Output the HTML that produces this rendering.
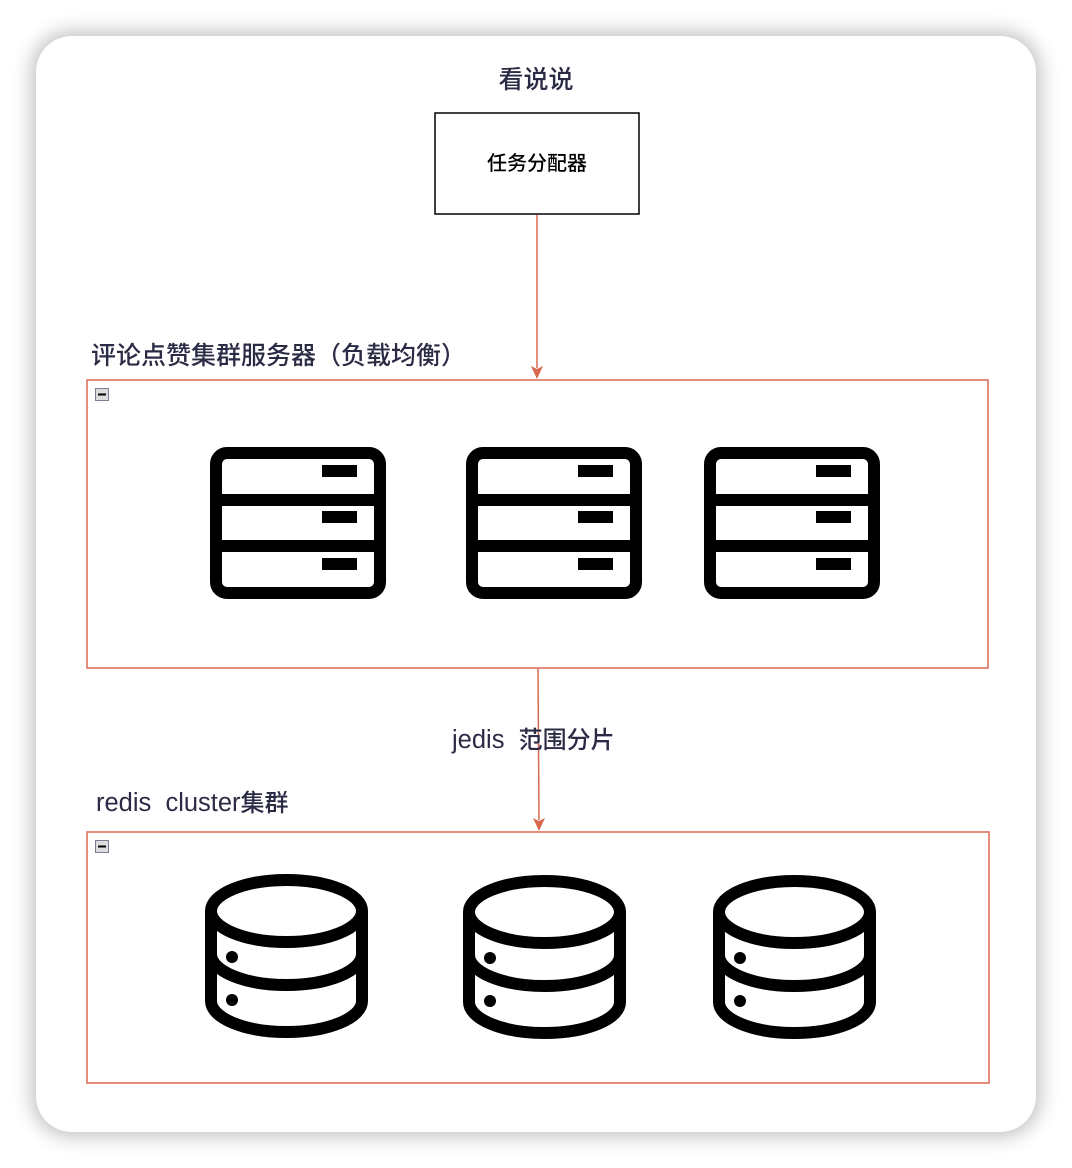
<!DOCTYPE html>
<html><head><meta charset="utf-8"><style>
html,body{margin:0;padding:0;background:#fff;}
body{width:1072px;height:1168px;overflow:hidden;position:relative;}
.card{position:absolute;left:36px;top:36px;width:1000px;height:1096px;border-radius:36px;background:#fff;box-shadow:0 0 18px 6px rgba(0,0,0,0.22);}
svg{position:absolute;left:0;top:0;}
text{font-family:"Liberation Sans","Noto Sans CJK SC",sans-serif;white-space:pre;font-weight:500;}
</style></head><body>
<div class="card"></div>
<svg width="1072" height="1168" viewBox="0 0 1072 1168">
<defs>
<g id="srv" fill="none" stroke="#000" stroke-width="12">
<rect x="6" y="6" width="164" height="140" rx="11"/>
<line x1="6" y1="53" x2="170" y2="53"/>
<line x1="6" y1="99" x2="170" y2="99"/>
<rect x="112" y="18" width="35" height="12" fill="#000" stroke="none"/>
<rect x="112" y="64" width="35" height="12" fill="#000" stroke="none"/>
<rect x="112" y="111" width="35" height="12" fill="#000" stroke="none"/>
</g>
<g id="db" fill="none" stroke="#000" stroke-width="12">
<ellipse cx="81.5" cy="37" rx="75.5" ry="31"/>
<path d="M6,37 V127 A75.5,31 0 0 0 157,127 V37"/>
<path d="M6,80 A75.5,31 0 0 0 157,80"/>
<circle cx="27" cy="83" r="6" fill="#000" stroke="none"/>
<circle cx="27" cy="126" r="6" fill="#000" stroke="none"/>
</g>
</defs>
<text x="536" y="88" font-size="25" fill="#2b2b45" text-anchor="middle">看说说</text>
<rect x="435" y="113" width="204" height="101" fill="#fff" stroke="#000" stroke-width="1.5"/>
<text x="537" y="170" font-size="20" fill="#000" text-anchor="middle">任务分配器</text>
<line x1="537" y1="215" x2="537" y2="368" stroke="#d9694e" stroke-width="1.5"/>
<path d="M531,366 L537,379 L543,366 L537,369 Z" fill="#d9694e"/>
<text x="91" y="364" font-size="25" fill="#2b2b45">评论点赞集群服务器（负载均衡）</text>
<rect x="87" y="380" width="901" height="288" fill="none" stroke="#d9694e" stroke-width="1.5"/>
<rect x="95.5" y="388.5" width="13" height="12" fill="#ddd" stroke="#7a8090"/><line x1="98" y1="394.5" x2="106" y2="394.5" stroke="#000" stroke-width="2"/>
<use href="#srv" x="210" y="447"/>
<use href="#srv" x="466" y="447"/>
<use href="#srv" x="704" y="447"/>
<line x1="538" y1="669" x2="539" y2="820" stroke="#d9694e" stroke-width="1.5"/>
<path d="M533,818 L539,831 L545,818 L539,821 Z" fill="#d9694e"/>
<text x="452" y="748" font-size="24" fill="#2b2b45"><tspan font-size="25.5">jedis  </tspan>范围分片</text>
<text x="96" y="811" font-size="24" fill="#2b2b45"><tspan font-size="25.5">redis  cluster</tspan>集群</text>
<rect x="87" y="832" width="902" height="251" fill="none" stroke="#d9694e" stroke-width="1.5"/>
<rect x="95.5" y="840.5" width="13" height="12" fill="#ddd" stroke="#7a8090"/><line x1="98" y1="846.5" x2="106" y2="846.5" stroke="#000" stroke-width="2"/>
<use href="#db" x="205" y="874"/>
<use href="#db" x="463" y="875"/>
<use href="#db" x="713" y="875"/>
</svg>
</body></html>
